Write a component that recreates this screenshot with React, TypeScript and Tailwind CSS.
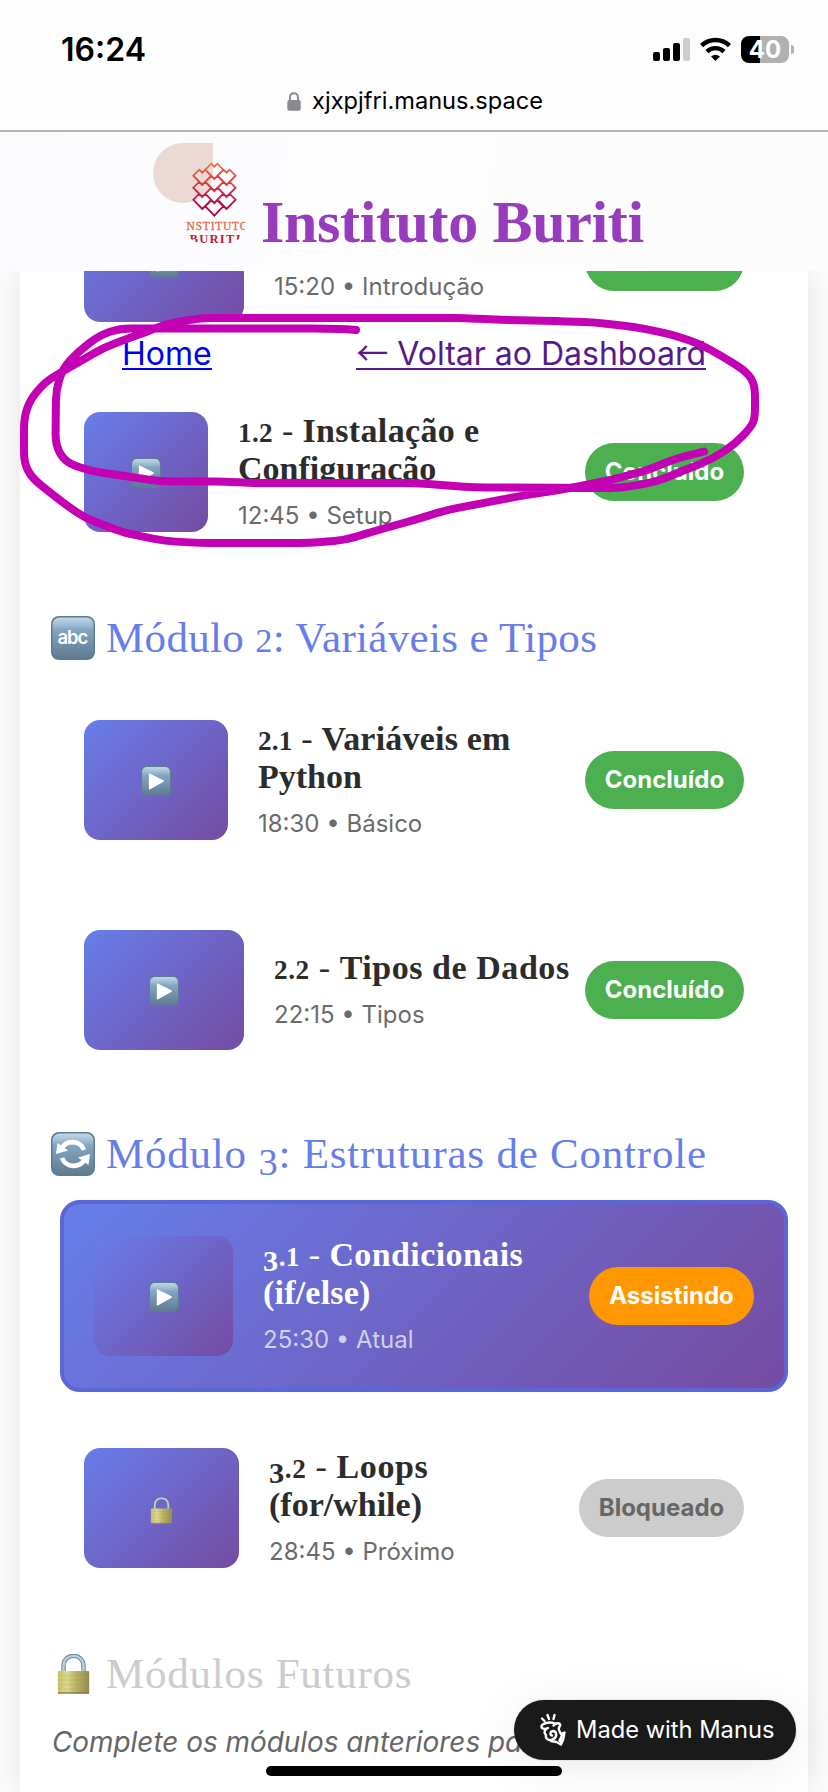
import React from "react";

type IconKind = "play" | "abc" | "sync";
type Pt = [number, number];

const MARKER: Pt[] = [
  [356, 330], [338, 328.7], [300, 328.5], [160, 328.5], [120, 328.5], [100, 335], [78, 352], [63, 368], [56, 390],
  [55.5, 445], [65, 462], [90, 471], [125, 476], [160, 481.5], [225, 481.5], [250, 483], [414, 483],
  [475, 487.5], [620, 488], [655, 482], [690, 468], [712, 459], [735, 444], [751, 427], [755, 418],
  [755, 385], [747, 372], [725, 358], [700, 344], [670, 334], [635, 327], [595, 322.5], [555, 321],
  [490, 319.5], [465, 318], [200, 318], [167, 324], [135, 336], [105, 347], [65, 370], [45, 382],
  [30, 400], [24, 418], [24, 463], [32, 478], [62, 502], [85, 518], [125, 533], [165, 541],
  [200, 543], [310, 543], [345, 540], [375, 531], [414, 520], [447, 510], [520, 496], [560, 490],
  [610, 480], [645, 471], [675, 459], [704, 451.5],
];

function smooth(points: Pt[]) {
  let d = `M${points[0][0]} ${points[0][1]}`;
  for (let i = 1; i < points.length - 1; i++) {
    const [x, y] = points[i];
    const [px, py] = points[i - 1];
    const [nx, ny] = points[i + 1];
    const a = Math.min(1, 22 / Math.hypot(px - x, py - y));
    const b = Math.min(1, 22 / Math.hypot(nx - x, ny - y));
    d += ` L${x + (px - x) * a * 0.5} ${y + (py - y) * a * 0.5} Q${x} ${y} ${x + (nx - x) * b * 0.5} ${y + (ny - y) * b * 0.5}`;
  }
  const last = points[points.length - 1];
  return `${d} L${last[0]} ${last[1]}`;
}

function TileIcon({ kind, className }: { kind: IconKind; className: string }) {
  const id = `tile-${kind}`;
  return (
    <svg viewBox="0 0 44 44" className={className}>
      <defs>
        <linearGradient id={id} x1="0" y1="0" x2="0" y2="1">
          <stop offset="0" stopColor="#c4d6e4" />
          <stop offset="0.16" stopColor="#a3bfd5" />
          <stop offset="0.3" stopColor="#83a5c2" />
          <stop offset="1" stopColor="#5f7b91" />
        </linearGradient>
      </defs>
      <rect width="44" height="44" rx="8" fill="#5c7b94" />
      <rect x="1.5" y="1.5" width="41" height="41" rx="7" fill={`url(#${id})`} />
      {kind === "play" && <path d="M12 10.5 L33 21 Q34.5 22 33 23 L12.8 34.5 Q11.5 35 11.5 33.5 V11.5 Q11.5 10.2 12.8 11Z" fill="#fff" />}
      {kind === "abc" && (
        <text x="22" y="28" textAnchor="middle" fill="#fff" fontSize="18.5" fontWeight="600" fontFamily="Inter, sans-serif" textLength="31">
          abc
        </text>
      )}
      {kind === "sync" && (
        <g fill="none" stroke="#fff" strokeWidth="4.6">
          <path d="M33 18 A12.5 12.5 0 0 0 10.5 16.5" />
          <path d="M11 26 A12.5 12.5 0 0 0 33.5 27.5" />
          <path d="M5 22 L6.5 11 L17 18.5Z" fill="#fff" stroke="none" />
          <path d="M39 22 L37.5 33 L27 25.5Z" fill="#fff" stroke="none" />
        </g>
      )}
    </svg>
  );
}

function Padlock({ className }: { className: string }) {
  return (
    <svg viewBox="0 0 32 40" className={className}>
      <defs>
        <linearGradient id="brass" x1="0" y1="0" x2="1" y2="0">
          <stop offset="0" stopColor="#c9c26b" />
          <stop offset="0.3" stopColor="#ddd78c" />
          <stop offset="0.55" stopColor="#bdb568" />
          <stop offset="1" stopColor="#958c4e" />
        </linearGradient>
      </defs>
      <path d="M6 19 V12 C6 -1.5 26 -1.5 26 12 V19" fill="none" stroke="#6f8494" strokeWidth="4.4" />
      <path d="M6 19 V12 C6 -1.5 26 -1.5 26 12 V19" fill="none" stroke="#b9d0e2" strokeWidth="2.4" />
      <rect x="0.3" y="17" width="31.4" height="22.6" rx="1" fill="url(#brass)" />
      <path d="M0.5 21.5H31.5M0.5 26H31.5M0.5 30.5H31.5M0.5 35H31.5" stroke="#8d8445" strokeOpacity="0.3" strokeWidth="0.6" />
      <path d="M0.5 39H31.5" stroke="#7d7138" strokeWidth="1.2" />
    </svg>
  );
}

/* Text-height numerals, with the 3 dropping below the baseline. */
function Num({ children }: { children: string }) {
  return (
    <span className="text-[0.8em] leading-none">
      {children.startsWith("3") ? (
        <>
          <span className="relative top-[0.19em] text-[1.12em] leading-none">3</span>
          {children.slice(1)}
        </>
      ) : (
        children
      )}
    </span>
  );
}

interface Lesson {
  num?: string;
  lines: { text: string; track: string }[];
  meta: string;
  thumb: string;
  status: "Concluído" | "Assistindo" | "Bloqueado";
}

const badgeStyle = {
  Concluído: "w-[159px] bg-[#4caf50] text-white",
  Assistindo: "w-[165px] bg-[#ff9800] text-white",
  Bloqueado: "w-[165px] bg-[#cccccc] text-[#666666]",
};

function LessonCard({ lesson, className = "mb-[18px]" }: { lesson: Lesson; className?: string }) {
  const active = lesson.status === "Assistindo";
  return (
    <article
      className={`flex h-[192px] shrink-0 items-center gap-[30px] ${
        active
          ? "rounded-[20px] border-4 border-[#5a67d8] bg-linear-[135deg,#667eea,#764ba2] px-[30px] text-white"
          : "pr-[44px] pl-[24px] text-[#2c2c2c]"
      } ${className}`}
    >
      <div className={`flex h-[120px] shrink-0 items-center justify-center rounded-[16px] bg-linear-[135deg,#667eea,#764ba2] ${lesson.thumb}`}>
        {lesson.status === "Bloqueado" ? <Padlock className="mt-1 h-[27px] w-[23px]" /> : <TileIcon kind="play" className="mt-0.5 size-[30px]" />}
      </div>
      <div className="min-w-0 flex-1 whitespace-nowrap">
        <h3 className="min-h-[38px] font-['Liberation_Serif',serif] text-[34px] leading-[38px] font-bold">
          {lesson.lines.map((l, i) => (
            <span key={l.text} className={`block h-[38px] ${l.track}`}>
              {i === 0 && lesson.num && (
                <>
                  <Num>{lesson.num}</Num>
                  <span className="font-normal">{" - "}</span>
                </>
              )}
              {l.text}
            </span>
          ))}
        </h3>
        <p className={`mt-[9px] -mb-px pt-px text-[24px] leading-[36px] ${active ? "text-white/70" : "text-[#6b6b6b]"}`}>{lesson.meta}</p>
      </div>
      <span className={`flex h-[58px] shrink-0 items-center justify-center rounded-[30px] text-[24px] font-bold ${badgeStyle[lesson.status]}`}>
        {lesson.status}
      </span>
    </article>
  );
}

function ModuleTitle({ icon, className, children }: { icon: React.ReactNode; className: string; children: React.ReactNode }) {
  return (
    <h2 className={`-ml-[9px] mb-[21px] flex h-[50px] shrink-0 items-center gap-[11px] font-['Liberation_Serif',serif] text-[43px] whitespace-nowrap ${className}`}>
      <span className="flex w-[44px] justify-center">{icon}</span>
      <span className="leading-[50px]">{children}</span>
    </h2>
  );
}

const lessons: Lesson[] = [
  { lines: [], meta: "15:20 • Introdução", thumb: "w-[160px]", status: "Concluído" },
  { num: "1.2", lines: [{ text: "Instalação e", track: "tracking-[0.35px]" }, { text: "Configuração", track: "" }], meta: "12:45 • Setup", thumb: "w-[124px]", status: "Concluído" },
  { num: "2.1", lines: [{ text: "Variáveis em", track: "tracking-[0.2px]" }, { text: "Python", track: "" }], meta: "18:30 • Básico", thumb: "w-[144px]", status: "Concluído" },
  { num: "2.2", lines: [{ text: "Tipos de Dados", track: "tracking-[0.55px]" }], meta: "22:15 • Tipos", thumb: "w-[160px]", status: "Concluído" },
  { num: "3.1", lines: [{ text: "Condicionais", track: "tracking-[0.4px]" }, { text: "(if/else)", track: "tracking-[0.2px]" }], meta: "25:30 • Atual", thumb: "w-[139px]", status: "Assistindo" },
  { num: "3.2", lines: [{ text: "Loops", track: "tracking-[0.6px]" }, { text: "(for/while)", track: "" }], meta: "28:45 • Próximo", thumb: "w-[155px]", status: "Bloqueado" },
];

function StatusBar() {
  return (
    <div className="flex h-[130px] shrink-0 flex-col">
      <div className="flex h-[80px] items-start justify-between pt-[30px] pr-[34px] pl-[61px]">
        <span className="text-[32px] leading-[40px] font-semibold text-black">16:24</span>
        <div className="flex items-center gap-[10px] pt-[6px]">
          <svg width="37" height="27" viewBox="0 0 37 27">
            <rect x="0" y="16" width="7" height="9" rx="2" />
            <rect x="10" y="12" width="7" height="13" rx="2" />
            <rect x="20" y="7" width="7" height="18" rx="2" />
            <rect x="30" y="2" width="7" height="23" rx="2" fill="#cecece" />
          </svg>
          <svg width="31" height="27" viewBox="0 0 31 27">
            <path d="M1.6 9.6 A20 20 0 0 1 29.4 9.6" fill="none" stroke="#000" strokeWidth="4.6" />
            <path d="M7 15.6 A12.2 12.2 0 0 1 24 15.6" fill="none" stroke="#000" strokeWidth="4.4" />
            <path d="M15.5 25 L11 20.6 Q15.5 16.8 20 20.6Z" />
          </svg>
          <div className="flex items-center gap-[2px]">
            <span className="flex h-[27px] w-[48px] items-center justify-center rounded-[8px] bg-linear-[90deg,#000_0_40%,#b1b1b1_40%_100%] text-[24px] leading-none font-bold text-white">
              40
            </span>
            <span className="h-[9px] w-[3px] rounded-r-full bg-[#b1b1b1]" />
          </div>
        </div>
      </div>
      <div className="flex h-[42px] items-center justify-center gap-[11px] pl-[2px] text-[23.6px] text-black">
        <svg width="14" height="19" viewBox="0 0 14 19">
          <path d="M3 9 V5.5 C3 -0.2 11 -0.2 11 5.5 V9" fill="none" stroke="#8a8a8e" strokeWidth="1.9" />
          <rect x="0.3" y="8" width="13.4" height="10.8" rx="2" fill="#8a8a8e" />
        </svg>
        <span>xjxpjfri.manus.space</span>
      </div>
    </div>
  );
}

const heart = "l-9 -9.3 l6 -6 l3 3 l3 -3 l6 6z";

function Logo() {
  return (
    <svg width="92" height="102" viewBox="153 142 92 102" className="shrink-0">
      <defs>
        <linearGradient id="logo" gradientUnits="userSpaceOnUse" x1="0" y1="163" x2="0" y2="216">
          <stop offset="0" stopColor="#ee7436" />
          <stop offset="0.5" stopColor="#cf2c4a" />
          <stop offset="1" stopColor="#a30046" />
        </linearGradient>
        <clipPath id="logoClip">
          <rect x="185" y="163" width="60" height="80" rx="17" />
        </clipPath>
      </defs>
      <path d="M213 143 V173 A30 30 0 1 1 183 143Z" fill="#ebdad3" />
      <path
        d={[
          [214.3, 179], [214.3, 191.2], [214.3, 203], [214.3, 215.6],
          [202.3, 185], [202.3, 197], [202.3, 209], [226.6, 185], [226.6, 197], [226.6, 209],
        ].map(([x, y]) => `M${x} ${y}l-9 -9.3 l6 -6 l3 3 l3 -3 l6 6z`.replace("l-9 -9.3 l6 -6 l3 3 l3 -3 l6 6z", heart)).join("")}
        fill="none"
        stroke="url(#logo)"
        strokeWidth="1.8"
      />
      <g clipPath="url(#logoClip)" fontFamily="Liberation Serif, serif" textAnchor="middle">
        <text x="215" y="229.5" fontSize="11.5" fill="#e66a4d" stroke="#e66a4d" strokeWidth="0.3" textLength="66">INSTITUTO</text>
        <text x="215" y="243" fontSize="12.5" fontWeight="700" fill="#b81f35" textLength="51">BURITI</text>
      </g>
    </svg>
  );
}

export default function App() {
  return (
    <main className="relative flex h-[1792px] w-[828px] flex-col overflow-hidden bg-[#fdfdfd] font-['Inter',sans-serif]">
      <StatusBar />
      <header className="z-10 flex h-[141px] shrink-0 items-start gap-[16px] border-t-2 border-[#b4b4b6] bg-linear-[100deg,#fbfbfe,#fdfdfe_40%,#fcfcfc] pt-[10px] pl-[153px]">
        <Logo />
        <h1 className="pt-[47px] font-['Liberation_Serif',serif] text-[60px] leading-[66px] font-bold tracking-[-0.35px] whitespace-nowrap text-[#963cbd]">
          Instituto Buriti
        </h1>
      </header>

      <div className="flex flex-1 flex-col overflow-hidden bg-[#fbfbfb] px-[20px]">
        <section className="flex flex-1 flex-col bg-white pr-[20px] pl-[40px] shadow-[0_0_30px_rgba(0,0,0,0.09)]">
          <LessonCard lesson={lessons[0]} className="-mt-[105px] mb-[18px]" />
          <LessonCard lesson={lessons[1]} />
          <ModuleTitle icon={<TileIcon kind="abc" className="size-[44px]" />} className="mt-[27px] tracking-[0.33px] text-[#667eea]">
            Módulo <Num>2</Num>: Variáveis e Tipos
          </ModuleTitle>
          <LessonCard lesson={lessons[2]} />
          <LessonCard lesson={lessons[3]} />
          <ModuleTitle icon={<TileIcon kind="sync" className="size-[44px]" />} className="mt-[25px] tracking-[0.78px] text-[#667eea]">
            Módulo <Num>3</Num>: Estruturas de Controle
          </ModuleTitle>
          <LessonCard lesson={lessons[4]} className="mb-[20px]" />
          <LessonCard lesson={lessons[5]} />
          <ModuleTitle icon={<Padlock className="h-[40px] w-[33px]" />} className="mt-[27px] tracking-[0.75px] text-[#cccccc]">
            Módulos Futuros
          </ModuleTitle>
          <p className="-ml-[8px] text-[27.9px] leading-[44px] whitespace-nowrap text-[#666666] italic">Complete os módulos anteriores para</p>
        </section>
      </div>

      <nav className="absolute top-[333px] left-[122px] flex h-[42px] w-[584px] justify-between text-[32px] leading-[42px] whitespace-nowrap underline decoration-2 underline-offset-[3px]">
        <a className="text-[#0000ee]">Home</a>
        <a className="text-[#551a8b]">
          <span className="font-['Noto_Sans_CJK_JP',sans-serif] leading-none">←</span> Voltar ao Dashboard
        </a>
      </nav>

      <svg className="pointer-events-none absolute top-0 left-0" width="828" height="1792" viewBox="0 0 828 1792">
        <path d={smooth(MARKER)} fill="none" stroke="#c400b5" strokeWidth="8" strokeLinecap="round" strokeLinejoin="round" />
      </svg>

      <div className="absolute top-[1700px] left-[514px] flex h-[60px] w-[282px] items-center gap-[9px] rounded-full bg-[#1a1a1a] pl-[25px] text-[23.7px] whitespace-nowrap text-white shadow-[0_8px_50px_rgba(0,0,0,0.08),0_0_2px_rgba(0,0,0,0.2)]">
        <svg width="28" height="34" viewBox="0 0 28 34" fill="none" stroke="#fff" strokeWidth="2.4" strokeLinecap="round" strokeLinejoin="round" className="shrink-0">
          <path d="M3 5.5 L5.5 8 M8.5 2 L10 6 M15.5 2 L14.5 6" />
          <path d="M17 11 C12 8 4 10 2.5 13 C2 16 6 16.5 9 15 C5.5 16 4.5 20 7 22 C6 26 10 28 13.5 26.5 C18 25 18.5 19 14.5 18 C11 18 10.5 22 13 22.5" />
          <path d="M14.5 12.5 C17 9 22.5 10 21 13 C19 14.5 20 18 22 21 L25.5 19.5 C25 24 24 28 22 31.5 L17.5 29 L12 28" />
          <path d="M22 22 L24.5 21 L22 30 L19 28Z" fill="#fff" stroke="none" />
        </svg>
        <span>Made with Manus</span>
      </div>

      <div className="absolute bottom-[16px] left-[266px] h-[10px] w-[296px] rounded-full bg-black" />
    </main>
  );
}
